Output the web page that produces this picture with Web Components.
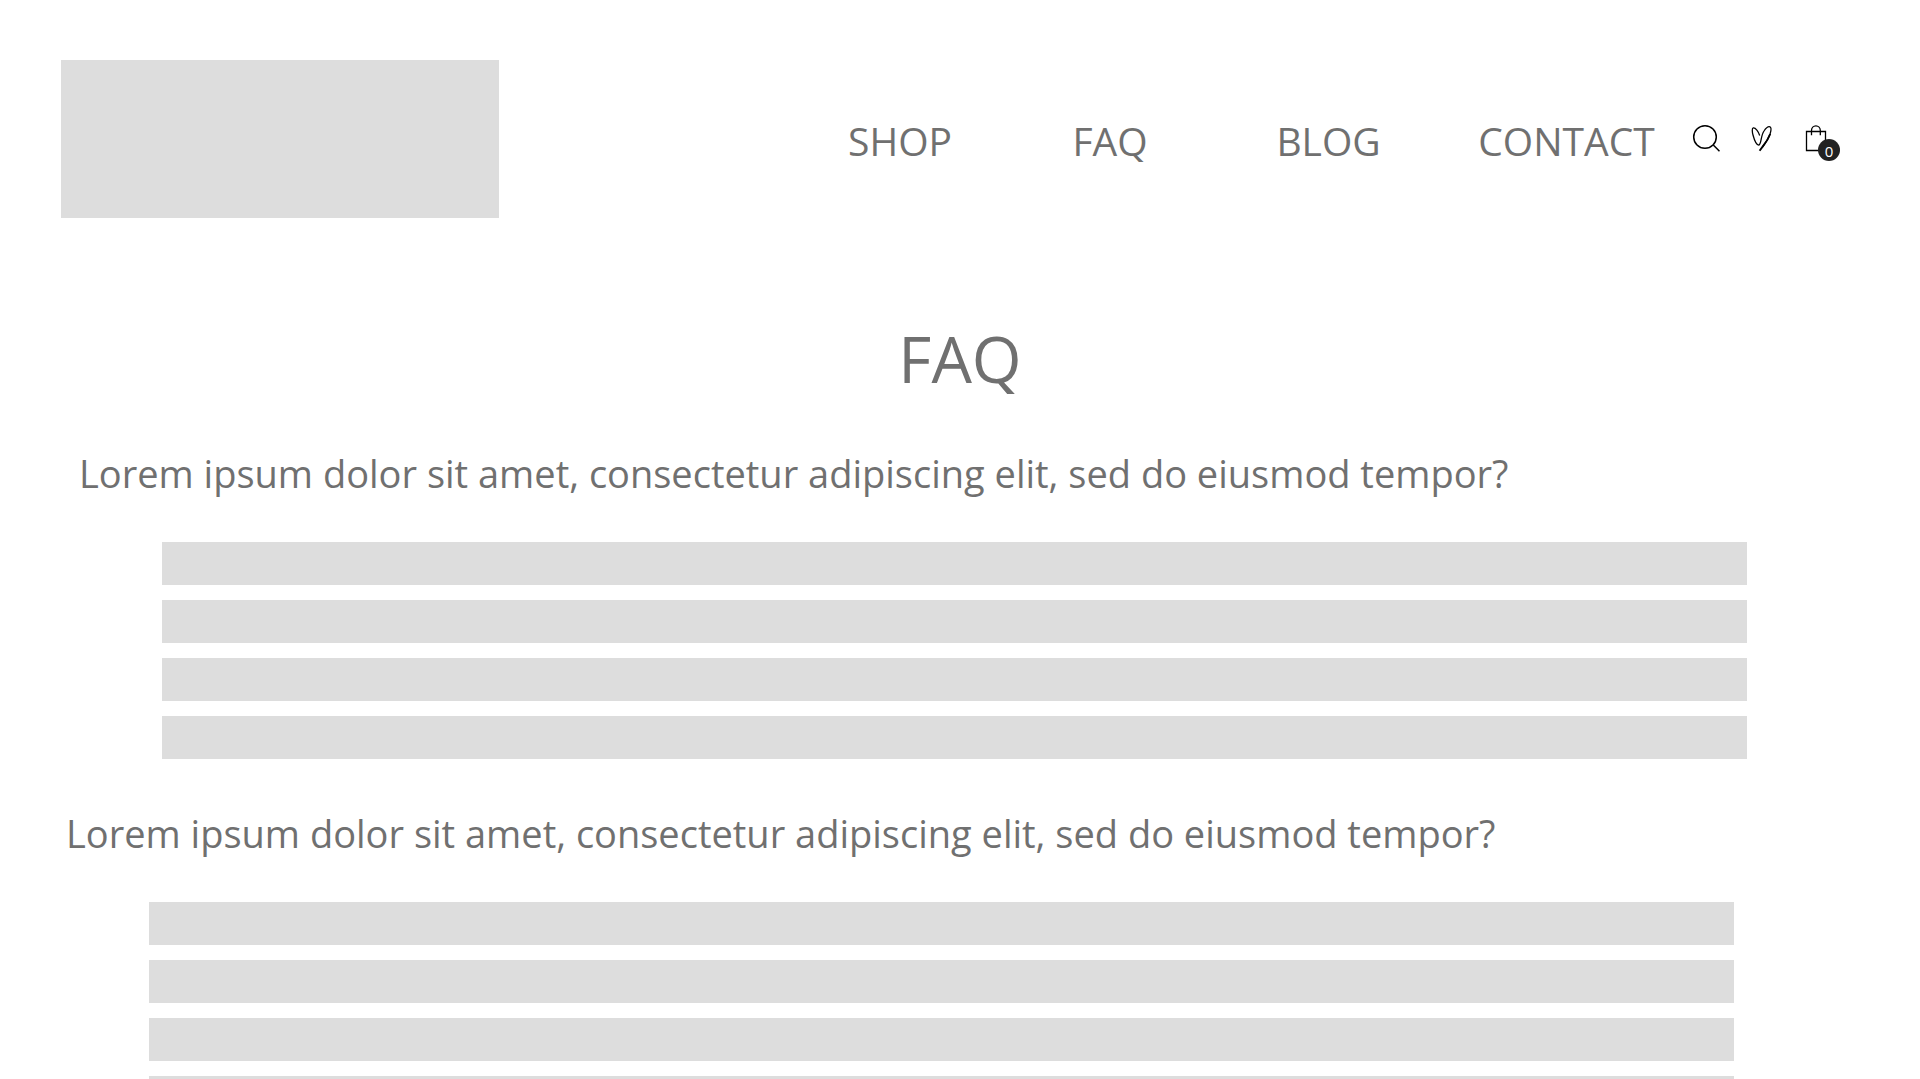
<!DOCTYPE html>
<html lang="en">
<head>
<meta charset="utf-8">
<title>FAQ</title>
<style>
  body { margin: 0; background: #fff; color: #707070; font-family: "Segoe UI", "Open Sans", sans-serif; font-size: 39px; line-height: 54px; }
</style>
</head>
<body>
<faq-page></faq-page>
<script>
  class SiteHeader extends HTMLElement {
    constructor() {
      super();
      this.attachShadow({ mode: "open" }).innerHTML = `
        <style>
          :host { display: block; }
          header { display: flex; align-items: center; padding: 60px 87px 0 61px; }
          .logo { width: 438px; height: 158px; background: #ddd; }
          nav { display: grid; grid-template-columns: 210px 210px 227px 249px; margin-left: auto; padding-top: 4px; text-align: center; }
          a { color: inherit; text-decoration: none; }
          .tools { display: flex; gap: 23px; }
          button { position: relative; width: 32px; height: 32px; padding: 0; border: 0; background: none; font: inherit; color: #000; cursor: pointer; }
          svg { display: block; width: 32px; height: 32px; fill: none; stroke: currentColor; stroke-width: 1.5; }
          .badge { position: absolute; left: 17px; top: 16px; width: 22px; height: 22px; border-radius: 50%; background: #222; color: #fff; font-size: 15px; line-height: 25px; text-align: center; }
        </style>
        <header>
          <div class="logo"></div>
          <nav>
            <a href="#shop">SHOP</a>
            <a href="#faq">FAQ</a>
            <a href="#blog">BLOG</a>
            <a href="#contact">CONTACT</a>
          </nav>
          <div class="tools">
            <button type="button" aria-label="Search">
              <svg viewBox="0 0 32 32"><circle cx="14" cy="14" r="11.3"/><path d="M22.3 22 28.5 28.2"/></svg>
            </button>
            <button type="button" aria-label="Favourites">
              <svg viewBox="0 0 32 32"><path stroke-width="1.300" d="M13.7 12.5C12.5 8.5 9.5 4.5 7.2 4.9 5.8 5.2 6.2 9 7 12c1.200 4.500 3.500 10 5.800 10.200C15.500 21.500 14.500 13 18 8c2-3 4.500-4.800 6-4.200 1.500.7 1.100 3.700.2 6.700-1.500 4.500-5 10-7.700 13.500"/><path stroke-width="1.900" d="M24.200 11C22.500 15.500 19.500 20 17 23.200L13.600 27.700"/></svg>
            </button>
            <button type="button" aria-label="Cart">
              <svg viewBox="0 0 32 32"><path stroke-width="1.300" d="M5.500 8.500H24.500V27.500H5.500ZM10.500 12.200V7.500a4.400 4.700 0 0 1 8.800 0v4.700"/></svg>
              <span class="badge">0</span>
            </button>
          </div>
        </header>`;
    }
  }
  customElements.define("site-header", SiteHeader);

  class FaqItem extends HTMLElement {
    constructor() {
      super();
      this.attachShadow({ mode: "open" }).innerHTML = `
        <style>
          :host { display: block; margin: 0 173px 45px 79px; }
          :host([shifted]) { margin-left: 66px; margin-right: 186px; }
          h2 { margin: 0 0 40px; font-size: 38px; font-weight: 400; line-height: 58px; }
          .answer { display: grid; gap: 15px; margin-left: 83px; }
          .line { height: 43px; background: #ddd; }
        </style>
        <h2><slot></slot></h2>
        <div class="answer">
          <div class="line"></div><div class="line"></div><div class="line"></div><div class="line"></div>
        </div>`;
    }
  }
  customElements.define("faq-item", FaqItem);

  class FaqPage extends HTMLElement {
    constructor() {
      super();
      this.attachShadow({ mode: "open" }).innerHTML = `
        <style>
          :host { display: block; }
          h1 { margin: 97px 0 41px; font-size: 64px; font-weight: 400; line-height: 88px; text-align: center; }
        </style>
        <site-header></site-header>
        <main>
          <h1>FAQ</h1>
          <faq-item>Lorem ipsum dolor sit amet, consectetur adipiscing elit, sed do eiusmod tempor?</faq-item>
          <faq-item shifted>Lorem ipsum dolor sit amet, consectetur adipiscing elit, sed do eiusmod tempor?</faq-item>
        </main>`;
    }
  }
  customElements.define("faq-page", FaqPage);
</script>
</body>
</html>
